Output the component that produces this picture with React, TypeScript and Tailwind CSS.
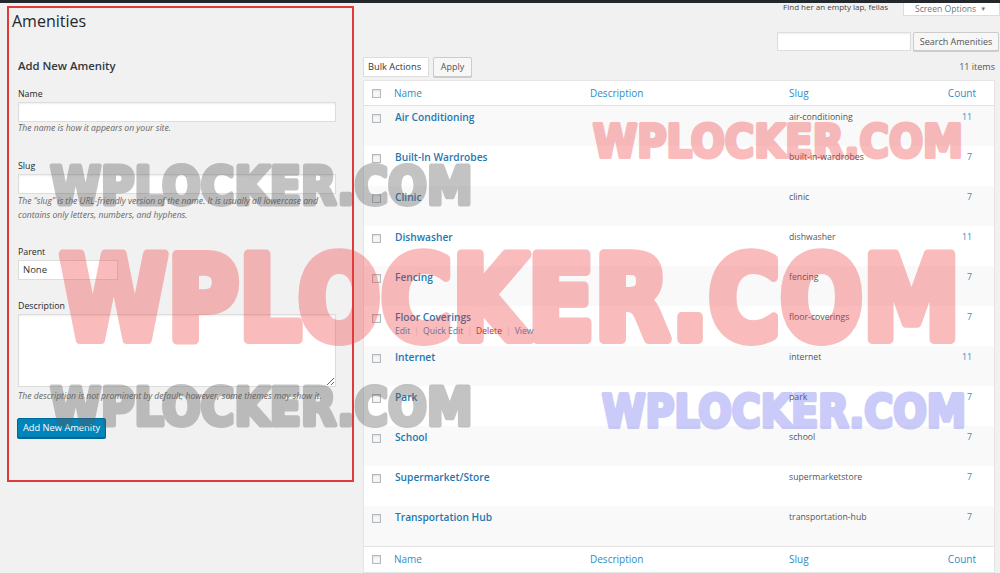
import React from "react";

type Amenity = { name: string; slug: string; count: number };

const amenities: Amenity[] = [
  { name: "Air Conditioning", slug: "air-conditioning", count: 11 },
  { name: "Built-In Wardrobes", slug: "built-in-wardrobes", count: 7 },
  { name: "Clinic", slug: "clinic", count: 7 },
  { name: "Dishwasher", slug: "dishwasher", count: 11 },
  { name: "Fencing", slug: "fencing", count: 7 },
  { name: "Floor Coverings", slug: "floor-coverings", count: 7 },
  { name: "Internet", slug: "internet", count: 11 },
  { name: "Park", slug: "park", count: 7 },
  { name: "School", slug: "school", count: 7 },
  { name: "Supermarket/Store", slug: "supermarketstore", count: 7 },
  { name: "Transportation Hub", slug: "transportation-hub", count: 7 },
];

const Checkbox = () => (
  <span className="block h-[9px] w-[9px] border border-[#b4b9be] bg-[#f7f7f7] shadow-[inset_0_1px_2px_rgba(0,0,0,0.1)]" />
);

// --- the stamped watermark text over the page ---
// stroke thickens DejaVu Bold to look like the heavy stamp; opacity on the group
// so the stroke and fill don't double up
const Watermark: React.FC<{
  x: number;
  baseline: number;
  width: number;
  size: number;
  weight: number;
  color: string;
  opacity: number;
}> = ({ x, baseline, width, size, weight, color, opacity }) => (
  <g opacity={opacity}>
    <text
      x={x + weight / 2}
      y={baseline - weight / 2}
      textLength={width - weight}
      lengthAdjust="spacingAndGlyphs"
      fontFamily="'DejaVu Sans', sans-serif"
      fontWeight={700}
      fontSize={size}
      fill={color}
      stroke={color}
      strokeWidth={weight}
      strokeLinejoin="round"
    >
      WPLOCKER.COM
    </text>
  </g>
);

const Label: React.FC<{ children: React.ReactNode; className?: string }> = ({
  children,
  className = "",
}) => (
  <div className={`h-[12px] text-[8.8px] leading-[12px] text-[#23282d] ${className}`}>
    {children}
  </div>
);

const Help: React.FC<{ children: React.ReactNode; className?: string }> = ({
  children,
  className = "",
}) => (
  <p className={`text-[8.6px] italic leading-[14px] text-[#666] ${className}`}>
    {children}
  </p>
);

const AddForm = () => (
  <div className="ml-[7px] mt-[3px] h-[476px] w-[347px] shrink-0 border-2 border-[#e03a3a]">
    <h1 className="h-[26px] pl-[3px] text-[16px] font-normal leading-[26px] text-[#23282d]">
      Amenities
    </h1>
    <div className="pl-[9px]">
      <h2 className="mt-[24px] h-[16px] text-[11.3px] font-semibold leading-[16px] text-[#32373c]">
        Add New Amenity
      </h2>

      <Label className="mt-[14px]">Name</Label>
      <div className="mt-[2px] h-[20px] w-[318px] border border-[#ddd] bg-white shadow-[inset_0_1px_2px_rgba(0,0,0,0.07)]" />
      <Help className="h-[12px] !leading-[12px]">The name is how it appears on your site.</Help>

      <Label className="mt-[26px]">Slug</Label>
      <div className="mt-[2px] h-[20px] w-[318px] border border-[#ddd] bg-white shadow-[inset_0_1px_2px_rgba(0,0,0,0.07)]" />
      <Help className="w-[320px]">
        The “slug” is the URL-friendly version of the name. It is usually all lowercase and
        contains only letters, numbers, and hyphens.
      </Help>

      <Label className="mt-[24px]">Parent</Label>
      <div className="mt-[2px] flex h-[20px] w-[100px] items-center border border-[#ddd] bg-white pl-[4px] text-[9.5px] text-[#32373c]">
        None
      </div>

      <Label className="mt-[20px]">Description</Label>
      <textarea
        readOnly
        className="mt-[2px] block h-[73px] w-[318px] border border-[#ddd] bg-white shadow-[inset_0_1px_2px_rgba(0,0,0,0.07)] outline-none"
      />
      <Help className="mt-[3px] h-[12px] !leading-[12px]">
        The description is not prominent by default; however, some themes may show it.
      </Help>

      <button
        type="button"
        className="ml-[-1px] mt-[16px] h-[20px] w-[89px] rounded-[2px] border border-[#006799] bg-[#0085ba] text-[9.3px] leading-[18px] text-white shadow-[0_1px_0_#006799]"
      >
        Add New Amenity
      </button>
    </div>
  </div>
);

const cols = "grid grid-cols-[22px_198px_199px_158px_1fr]";

const TermsTable = () => (
  <div className="mr-[5px] mt-[3px] border border-[#e5e5e5] bg-white shadow-[0_1px_1px_rgba(0,0,0,0.04)]">
    <div className={`${cols} h-[25px] items-center border-b border-[#e1e1e1] text-[10px] text-[#2f8cc4]`}>
      <span className="pl-[8px]">
        <Checkbox />
      </span>
      <span className="pl-[8px]">Name</span>
      <span className="pl-[6px]">Description</span>
      <span className="pl-[6px]">Slug</span>
      <span className="pr-[18px] text-right">Count</span>
    </div>

    {amenities.map((a, i) => (
      <div
        key={a.slug}
        className={`${cols} h-[40px] pt-[4px] ${i % 2 === 0 ? "bg-[#f9f9f9]" : "bg-white"}`}
      >
        <span className="pl-[8px] pt-[4px]">
          <Checkbox />
        </span>
        <div className="pl-[9px]">
          <div className="text-[10.2px] font-semibold leading-[14px] text-[#1f77b0]">{a.name}</div>
          {a.name === "Floor Coverings" && (
            <div className="mt-[1px] flex items-center text-[8.6px] leading-[12px] text-[#2f8cc4]">
              <span>Edit</span>
              <span className="px-[4px] text-[#ddd]">|</span>
              <span>Quick Edit</span>
              <span className="px-[4px] text-[#ddd]">|</span>
              <span className="text-[#c0252a]">Delete</span>
              <span className="px-[4px] text-[#ddd]">|</span>
              <span>View</span>
            </div>
          )}
        </div>
        <span />
        <span className="pl-[6px] text-[8.7px] leading-[14px] text-[#555]">{a.slug}</span>
        <span className="pr-[22px] text-right text-[8.7px] leading-[14px] text-[#2f8cc4]">
          {a.count}
        </span>
      </div>
    ))}

    <div className={`${cols} h-[26px] items-center border-t border-[#e1e1e1] text-[10px] text-[#2f8cc4]`}>
      <span className="pl-[8px]">
        <Checkbox />
      </span>
      <span className="pl-[8px]">Name</span>
      <span className="pl-[6px]">Description</span>
      <span className="pl-[6px]">Slug</span>
      <span className="pr-[18px] text-right">Count</span>
    </div>
  </div>
);

const App: React.FC = () => {
  return (
    <div className="relative h-[573px] w-[1000px] overflow-hidden bg-[#f1f1f1] font-['Open_Sans',sans-serif]">
      <div className="h-[3px] bg-[#23282d]" />

      <div className="flex">
        <AddForm />

        <div className="ml-[9px] flex min-w-0 flex-1 flex-col">
          {/* top strip: help text + screen options tab */}
          <div className="flex h-[12px] items-start justify-end">
            <span className="mr-[15px] mt-[-1px] text-[8px] leading-[10px] text-[#444]">
              Find her an empty lap, fellas
            </span>
            <div className="flex h-[13px] w-[97px] items-center border-x border-b border-[#ddd] bg-white pl-[11px] text-[8.6px] text-[#72777c]">
              Screen Options <span className="ml-[4px] text-[6px]">▼</span>
            </div>
          </div>

          {/* search */}
          <div className="mt-[17px] flex justify-end pr-[1px]">
            <div className="h-[19px] w-[134px] border border-[#ddd] bg-white shadow-[inset_0_1px_2px_rgba(0,0,0,0.07)]" />
            <div className="ml-[2px] flex h-[19px] w-[86px] items-center justify-center rounded-[2px] border border-[#ccc] bg-[#f7f7f7] text-[9px] text-[#555] shadow-[0_1px_0_#ccc]">
              Search Amenities
            </div>
          </div>

          {/* bulk actions */}
          <div className="mt-[6px] flex h-[20px] items-center pr-[5px]">
            <div className="flex h-[20px] w-[66px] items-center border border-[#ddd] bg-white pl-[4px] text-[9.3px] text-[#32373c]">
              Bulk Actions
            </div>
            <div className="ml-[4px] flex h-[20px] w-[39px] items-center justify-center rounded-[2px] border border-[#ccc] bg-[#f7f7f7] text-[9px] text-[#555] shadow-[0_1px_0_#ccc]">
              Apply
            </div>
            <span className="ml-auto text-[9px] text-[#555]">11 items</span>
          </div>

          <TermsTable />
        </div>
      </div>

      <svg className="pointer-events-none absolute left-0 top-0" width={1000} height={573}>
        <Watermark x={591} baseline={159} width={374} size={45} weight={4} color="#f03a3a" opacity={0.34} />
        <Watermark x={48} baseline={206} width={427} size={51} weight={5} color="#5a5a5a" opacity={0.36} />
        <Watermark x={55} baseline={344} width={910} size={116} weight={10} color="#f03a3a" opacity={0.34} />
        <Watermark x={48} baseline={427} width={427} size={51} weight={5} color="#5a5a5a" opacity={0.36} />
        <Watermark x={600} baseline={429} width={368} size={45} weight={4} color="#5555ee" opacity={0.3} />
      </svg>
    </div>
  );
};

export default App;
